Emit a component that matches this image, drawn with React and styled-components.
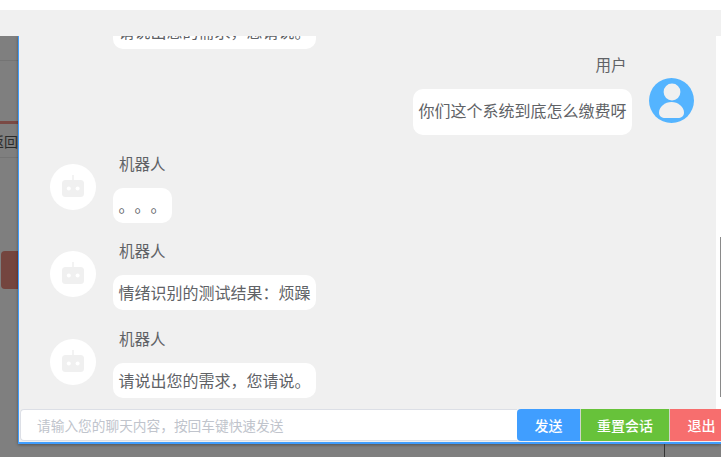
import styled, { createGlobalStyle } from 'styled-components'

const GlobalStyle = createGlobalStyle`
    html, body {
        margin: 0;
        padding: 0;
        background: #fff;
    }
    * {
        box-sizing: border-box;
    }
`

const messages = [
    { id: 1, side: 'bot', text: '请说出您的需求，您请说。', gap: 0 },
    { id: 2, side: 'user', name: '用户', text: '你们这个系统到底怎么缴费呀', gap: 4 },
    { id: 3, side: 'bot', name: '机器人', text: '。。。', gap: 16.5 },
    { id: 4, side: 'bot', name: '机器人', text: '情绪识别的测试结果：烦躁', gap: 15.5 },
    { id: 5, side: 'bot', name: '机器人', text: '请说出您的需求，您请说。', gap: 16.5 },
]

const RobotIcon = () => (
    <svg width="46" height="46" viewBox="0 0 46 46">
        <circle cx="23" cy="23" r="23" fill="#fff" />
        <rect x="22.2" y="11" width="1.6" height="6" fill="#f0f0f0" />
        <rect x="12" y="16" width="22" height="17" rx="3.5" fill="#f0f0f0" />
        <circle cx="18.8" cy="24.4" r="2" fill="#fff" />
        <circle cx="27.6" cy="24.4" r="2" fill="#fff" />
    </svg>
)

const UserIcon = () => (
    <svg width="45" height="45" viewBox="0 0 45 45">
        <circle cx="22.5" cy="22.5" r="22.5" fill="#54b4ff" />
        <circle cx="23" cy="14" r="8.4" fill="#f0f0f0" />
        <path d="M22.500 24C29 24 35 29 35 34.500C35 38.500 32 40 29 40H16C13 40 10 38.500 10 34.500C10 29 16 24 22.500 24z" fill="#f0f0f0" />
    </svg>
)

export default function App() {
    return (
        <Page>
            <GlobalStyle />
            <TopBand />
            <Stage>
                <LeftBehind>
                    <FaintLine $top={24} />
                    <AccentLine />
                    <BackLabel>返回</BackLabel>
                    <FaintLine $top={0} />
                    <BehindButton />
                </LeftBehind>
                <RightColumn>
                    <Modal>
                        <ChatBody>
                            <ChatArea>
                                {messages.map((msg) => (
                                    <Row key={msg.id} $side={msg.side} $gap={msg.gap}>
                                        <Avatar $side={msg.side}>
                                            {msg.side === 'user' ? <UserIcon /> : <RobotIcon />}
                                        </Avatar>
                                        <Content $side={msg.side}>
                                            <Name $side={msg.side}>{msg.name}</Name>
                                            <Bubble $side={msg.side}>{msg.text}</Bubble>
                                        </Content>
                                    </Row>
                                ))}
                            </ChatArea>
                            <ScrollStrip>
                                <ScrollThumb />
                            </ScrollStrip>
                        </ChatBody>
                        <InputRow>
                            <ChatInput placeholder="请输入您的聊天内容，按回车键快速发送" />
                            <ActionButton $bg="#409eff" $width={63} $first>发送</ActionButton>
                            <ActionButton $bg="#67c23a" $width={89}>重置会话</ActionButton>
                            <ActionButton $bg="#f76e6e" $width={64}>退出</ActionButton>
                        </InputRow>
                    </Modal>
                    <UnderModal>
                        <UnderDivider />
                    </UnderModal>
                </RightColumn>
            </Stage>
        </Page>
    )
}

const Page = styled.div`
    width: 721px;
    height: 459px;
    padding-top: 10px;
    overflow: hidden;
    background: #fff;
    font-family: "Noto Sans CJK SC", "Liberation Sans", sans-serif;
    text-spacing-trim: space-all;
`
const TopBand = styled.div`
    position: relative;
    z-index: 1;
    height: 26px;
    background: #f0f0f0;
`
const Stage = styled.div`
    display: flex;
    height: 421px;
    background: #7f7f7f;
`
const LeftBehind = styled.div`
    flex: 0 0 18px;
    display: flex;
    flex-direction: column;
    overflow: hidden;
`
const FaintLine = styled.div`
    height: 1px;
    margin-top: ${props => props.$top}px;
    background: #747474;
`
const AccentLine = styled.div`
    height: 3px;
    margin-top: 60px;
    background: #7a4a45;
`
const BackLabel = styled.div`
    height: 33px;
    display: flex;
    justify-content: flex-end;
    align-items: center;
    font-size: 14px;
    white-space: nowrap;
    color: #2b2b2b;
`
const BehindButton = styled.div`
    height: 38px;
    margin: 93px 0 0 1px;
    background: #74453f;
    border-radius: 4px 0 0 4px;
`
const RightColumn = styled.div`
    flex: 1;
    min-width: 0;
    display: flex;
    flex-direction: column;
`
const Modal = styled.div`
    height: 408px;
    display: flex;
    flex-direction: column;
    background: #f0f0f0;
    border-left: 1px solid #409eff;
    border-bottom: 2px solid #409eff;
    box-shadow: 0 1px 3px rgba(0, 0, 0, 0.35);
`
const ChatBody = styled.div`
    flex: 1;
    min-height: 0;
    display: flex;
`
const ChatArea = styled.div`
    flex: 1;
    min-width: 0;
    display: flex;
    flex-direction: column;
    justify-content: flex-end;
    padding-bottom: 11px;
    overflow: hidden;
`
const ScrollStrip = styled.div`
    flex: 0 0 5px;
    padding-top: 201px;
    background: #fff;
`
const ScrollThumb = styled.div`
    width: 1px;
    height: 160px;
    margin-left: 4px;
    background: #8a8a8a;
`
const Row = styled.div`
    flex-shrink: 0;
    display: flex;
    flex-direction: ${props => props.$side === 'user' ? 'row-reverse' : 'row'};
    gap: 17px;
    margin-top: ${props => props.$gap}px;
    padding: ${props => props.$side === 'user' ? '0 22px 0 0' : '0 0 0 31px'};
`
const Avatar = styled.div`
    flex: 0 0 ${props => props.$side === 'user' ? '45px' : '46px'};
    height: 46px;
    margin-top: ${props => props.$side === 'user' ? '25px' : '12px'};
    & svg {
        display: block;
    }
`
const Content = styled.div`
    display: flex;
    flex-direction: column;
    align-items: ${props => props.$side === 'user' ? 'flex-end' : 'flex-start'};
`
const Name = styled.div`
    height: 24px;
    margin-bottom: 12px;
    padding: 0 5.5px 0 6px;
    font-size: 15.5px;
    line-height: 23px;
    color: #606266;
`
const Bubble = styled.div`
    height: ${props => props.$side === 'user' ? '46px' : '35.5px'};
    padding: 0 5.5px;
    font-size: 16px;
    line-height: ${props => props.$side === 'user' ? '43px' : '34.5px'};
    white-space: nowrap;
    color: #606266;
    background: #fff;
    border-radius: 10px;
`
const InputRow = styled.div`
    flex: 0 0 33px;
    display: flex;
    padding-left: 1px;
    background: #f0f0f0;
`
const ChatInput = styled.input`
    flex: 0 0 497px;
    height: 32px;
    padding: 0 16px;
    font-family: inherit;
    font-size: 13.7px;
    color: #606266;
    background: #fff;
    border: 1px solid #dcdfe6;
    border-right: none;
    border-radius: 4px 0 0 4px;
    outline: none;
    &::placeholder {
        color: #c0c4cc;
        opacity: 1;
    }
`
const ActionButton = styled.button`
    flex: 0 0 ${props => props.$width}px;
    height: 32px;
    padding: 0;
    font-family: inherit;
    font-size: 14px;
    font-weight: 500;
    color: #fff;
    background: ${props => props.$bg};
    border: none;
    border-left: ${props => props.$first ? 'none' : '1px solid #cfd6c8'};
    border-radius: ${props => props.$first ? '4px 0 0 4px' : '0'};
`
const UnderModal = styled.div`
    height: 13px;
    padding-left: 646px;
`
const UnderDivider = styled.div`
    width: 1px;
    height: 13px;
    background: #333;
`
